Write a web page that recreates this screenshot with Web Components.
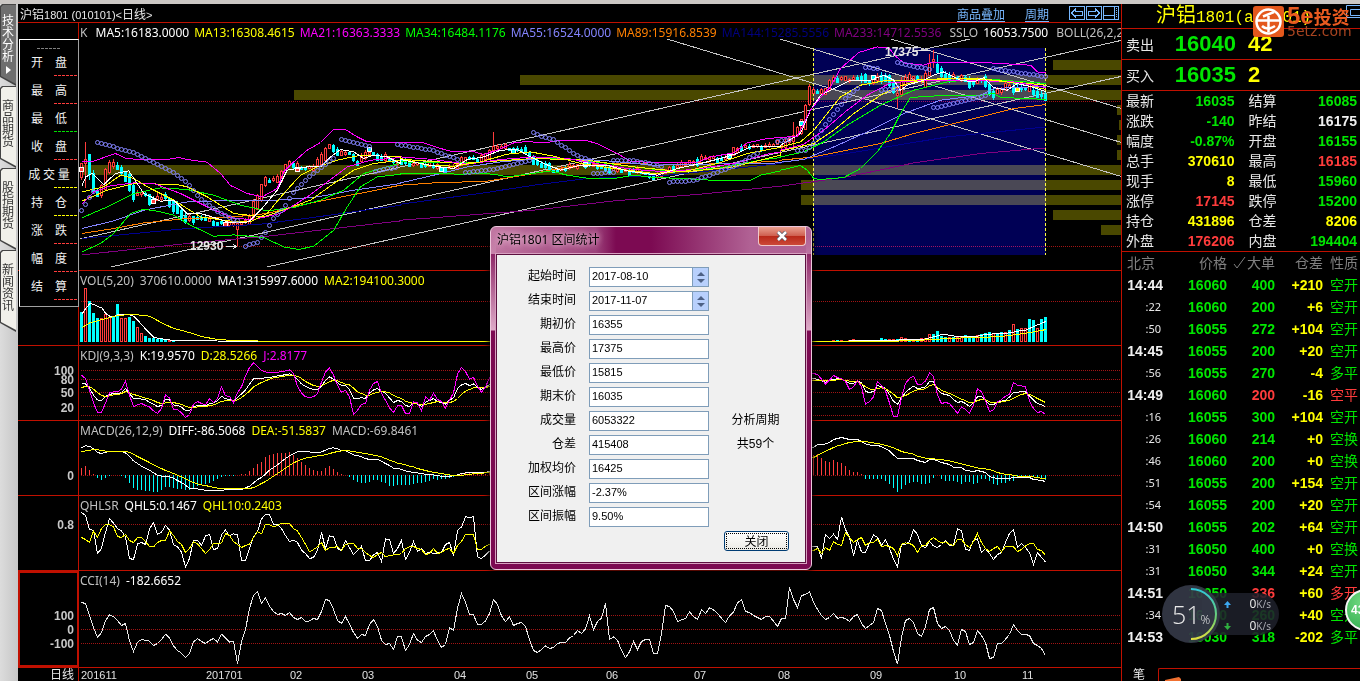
<!DOCTYPE html>
<html lang="zh-CN">
<head>
<meta charset="utf-8">
<title>沪铝1801 日线</title>
<style>
	html, body {
		margin: 0;
		background: #000;
		overflow: hidden;
	}

	body {
		font: 12px "Liberation Sans", "Noto Sans CJK SC", sans-serif;
		color: #e8e8e8;
	}
</style>
</head>
<body>
<trade-desk>
	<side-tabs slot="tabs"></side-tabs>
	<chart-header></chart-header>
	<k-panel top="23">
		<span style="color:#c0c0c0">K</span>
		<span style="color:#fff">&nbsp;MA5:16183.0000</span>
		<span style="color:#ff0">MA13:16308.4615</span>
		<span style="color:#f0f">MA21:16363.3333</span>
		<span style="color:#0f0">MA34:16484.1176</span>
		<span style="color:#8484ff">MA55:16524.0000</span>
		<span style="color:#ff8000">MA89:15916.8539</span>
		<span style="color:#000080">MA144:15285.5556</span>
		<span style="color:#800080">MA233:14712.5536</span>
		<span style="color:#c0c0c0">&nbsp;SSLO</span>
		<span style="color:#fff">16053.7500</span>
		<span style="color:#c0c0c0">&nbsp;BOLL(26,2,2)</span>
	</k-panel>
	<vol-panel top="271">
		<span style="color:#c0c0c0">VOL(5,20)</span>
		<span style="color:#c0c0c0">370610.0000</span>
		<span style="color:#fff">MA1:315997.6000</span>
		<span style="color:#ff0">MA2:194100.3000</span>
	</vol-panel>
	<kdj-panel top="346">
		<span style="color:#c0c0c0">KDJ(9,3,3)</span>
		<span style="color:#fff">K:19.9570</span>
		<span style="color:#ff0">D:28.5266</span>
		<span style="color:#f0f">J:2.8177</span>
	</kdj-panel>
	<macd-panel top="421">
		<span style="color:#c0c0c0">MACD(26,12,9)</span>
		<span style="color:#fff">DIFF:-86.5068</span>
		<span style="color:#ff0">DEA:-51.5837</span>
		<span style="color:#c0c0c0">MACD:-69.8461</span>
	</macd-panel>
	<qhl-panel top="496">
		<span style="color:#c0c0c0">QHLSR</span>
		<span style="color:#fff">QHL5:0.1467</span>
		<span style="color:#ff0">QHL10:0.2403</span>
	</qhl-panel>
	<cci-panel top="571">
		<span style="color:#c0c0c0">CCI(14)</span>
		<span style="color:#fff">-182.6652</span>
	</cci-panel>
	<time-axis></time-axis>
	<price-list slot="over"></price-list>
	<quote-board slot="quotes"></quote-board>
	<range-dialog slot="over"></range-dialog>
	<speed-meter slot="over"></speed-meter>
</trade-desk>

<script>
function shadow(el, html) {
	const template = document.createElement("template");
	template.innerHTML = html;
	el.attachShadow({ mode: "open" });
	el.shadowRoot.append(template.content.cloneNode(true));
}

class TradeDesk extends HTMLElement {
	constructor() {
		super();
		shadow(this, `
<style>
	:host {
		display: flex;
		position: relative;
		min-height: 100vh;
		box-sizing: border-box;
		border-top: 4px solid #cbc7c4;
		overflow: hidden;
	}

	main {
		flex: 1;
		min-width: 0;
		display: flex;
		flex-direction: column;
	}
</style>
<slot name="tabs"></slot>
<main><slot></slot></main>
<slot name="quotes"></slot>
<slot name="over"></slot>`);
	}
}
customElements.define("trade-desk", TradeDesk);

class SideTabs extends HTMLElement {
	constructor() {
		super();
		const tabs = ["技术分析", "商品期货", "股指期货", "新闻资讯"];
		shadow(this, `
<style>
	:host {
		display: flex;
		flex-direction: column;
		flex: none;
		width: 16px;
		padding-right: 2px;
		background: linear-gradient(90deg, #dcdcdc, #c6c6c6);
	}

	button {
		position: relative;
		width: 16px;
		height: 82px;
		margin: 0;
		padding: 0 2px 8px 2px;
		border: 0;
		background: #444;
		clip-path: polygon(0 2px, 2px 0, 100% 0, 100% 100%, 0 73px);
		font: 12px/12px "Noto Sans CJK SC", sans-serif;
		color: #333;
	}

	button::before {
		content: "";
		position: absolute;
		inset: 1px 0 0 1px;
		background: #f1f0ea;
		clip-path: polygon(0 2px, 2px 0, 100% 0, 100% 79px, 0 71px);
	}

	button:first-of-type {
		padding-bottom: 3px;
		color: #fff;
	}

	button:first-of-type::before {
		background: #6f6f6f;
	}

	span {
		position: relative;
		display: block;
	}

	svg {
		position: relative;
		display: block;
		margin: 4px auto 0;
	}
</style>
${tabs.map((t, i) => `<button type="button"><span>${[...t].join("<br>")}</span>${i ? "" : '<svg width="5" height="8"><path d="M0 0L5 4L0 8z" fill="#fff"/></svg>'}</button>`).join("")}`);
	}
}
customElements.define("side-tabs", SideTabs);

class ChartHeader extends HTMLElement {
	constructor() {
		super();
		shadow(this, `
<style>
	:host {
		display: flex;
		align-items: center;
		height: 18px;
		padding-left: 2px;
		border-bottom: 1px solid #c01000;
		border-right: 1px solid #c01000;
		font: 12px "Liberation Sans", "Noto Sans CJK SC", sans-serif;
		white-space: nowrap;
	}

	h1 {
		flex: 1;
		margin: 0;
		font: inherit;
	}

	small {
		font-size: 11px;
	}

	a {
		margin-right: 20px;
		color: #78b8ff;
		text-underline-offset: 2px;
	}

	svg {
		margin-right: 2px;
	}
</style>
<h1>沪铝<small>1801 (010101)&lt;</small>日线<small>&gt;</small></h1>
<a href="#">商品叠加</a>
<a href="#">周期</a>
<svg width="50" height="14" fill="none" stroke="#78b8ff" shape-rendering="crispEdges">
	<path d="M.5.5h15v13h-15zM17.5.5h15v13h-15zM34.5.5h15v13h-15zM45.5.5v13M34.5 9.5h11"/>
	<path d="M2.5 7l4-4v2h7v4h-7v2zM30.5 7l-4-4v2h-7v4h7v2z"/>
	<path d="M47.5 2v10" stroke-dasharray="1 1"/>
</svg>`);
	}
}
customElements.define("chart-header", ChartHeader);

/* One indicator strip: scale on the left, plot on the right, legend over the plot.
   Series are kept in thirds of a pixel, one bar is 4 pixels wide. */
class ChartPanel extends HTMLElement {
	connectedCallback() {
		this.top = Number(this.getAttribute("top"));
		shadow(this, `
<style>
	:host {
		display: grid;
		grid-template-columns: 61px minmax(0, 1fr);
		border-bottom: 1px solid #c01000;
		border-right: 1px solid #c01000;
	}

	.scale {
		width: 60px;
		border-right: 1px solid #c01000;
		font: bold 12px "Liberation Sans", sans-serif;
		fill: #c8c8c8;
	}

	.scale.active {
		outline: 2px solid #c01000;
		outline-offset: -2px;
	}

	.plot {
		grid-area: 1 / 2;
		width: 100%;
	}

	svg {
		display: block;
	}

	.legend {
		grid-area: 1 / 2;
		z-index: 1;
		height: 20px;
		padding-left: 1px;
		display: flex;
		gap: ${this.gap}px;
		overflow: hidden;
		font: 12px/20px "Noto Sans", sans-serif;
		white-space: nowrap;
	}
</style>
<svg class="scale ${this.active ? "active" : ""}" height="${this.size}">
	${this.scale.map(([v, y]) => `<text x="56" y="${y - this.top + 5}" text-anchor="end">${v}</text>`).join("")}
</svg>
<svg class="plot" height="${this.size}" fill="none" shape-rendering="crispEdges">
	${this.guides.map(y => `<path d="M2 ${y - this.top + .5}h3000" stroke="#a01414" stroke-dasharray="1 1"/>`).join("")}
	<g transform="translate(-79,${-this.top})">${this.draw()}</g>
</svg>
<div class="legend"><slot></slot></div>`);
	}

	get size() { return 74; }
	get gap() { return 6; }
	get scale() { return []; }
	get guides() { return []; }
}

// parts: [x offset, y offset, "x,y x,y ..."]
function points(parts) {
	return parts.flatMap(([dx, dy, s]) => s.split(" ").map(p => {
		const [x, y] = p.split(",");
		return [dx + x / 3, dy + y / 3];
	}));
}

// parts: [first x, y offset, "y y y ..."]
function steps([x, dy, s]) {
	return s.split(" ").map((y, i) => [x + i * 4, dy + y / 3]);
}

function line(pts, color) {
	return `<polyline points="${pts.map(([x, y]) => (x + .5).toFixed(1) + "," + (y + .2).toFixed(1)).join(" ")}" stroke="${color}"/>`;
}

function at(pts, x) {
	let i = 1;
	while (i < pts.length - 1 && pts[i][0] < x) i++;
	const [x0, y0] = pts[i - 1], [x1, y1] = pts[i];
	return x1 === x0 ? y1 : y0 + (y1 - y0) * (x - x0) / (x1 - x0);
}

const RED = "#ff3c3c", CYAN = "#00ffff";

class KPanel extends ChartPanel {
	get size() { return 247; }
	get gap() { return 5; }
	get guides() { return [101, 173, 246]; }

	bands() {
		return [[1053, 60], [520, 75], [294, 90], [1117, 105], [1119, 120], [1117, 135], [1117, 150],
			[80, 165], [801, 180], [801, 195], [1053, 210], [1101, 225]]
			.map(([x, y]) => `<rect x="${x}" y="${y}" width="2000" height="10" fill="#4a4800"/>`).join("");
	}

	averages() {
		const z = (a, b, c) => points([[0, 0, a], [400, 0, b], [780, 0, c]]);
		return [
			["#800080", z("244,764 560,730 800,708 1200,662", "0,660 400,630 640,602 900,582 1140,558", "0,558 200,530 400,488 600,460 797,443")],
			["#000090", z("244,715 560,685 780,672 950,650 1200,615", "0,612 250,578 400,555 560,535 800,525 1000,505 1140,490", "0,487 200,460 500,410 797,380")],
			["#ff8000", z("244,700 340,685 430,668 560,655 700,650 800,640 900,615 1000,595 1100,575 1200,555", "0,555 100,548 260,543 400,520 500,500 640,490 850,487 1000,490 1140,482", "0,480 100,470 300,430 400,400 600,350 700,325 797,313")],
			["#8484ff", z("244,685 340,662 430,630 560,605 700,600 830,600 950,590 1060,570 1200,550", "0,548 100,525 200,500 300,485 420,475 600,480 760,495 900,492 1050,490 1140,488", "0,486 70,478 160,440 260,395 370,340 480,300 600,285 640,265 797,258")],
			["#00ff00", z("244,653 320,620 400,580 480,563 560,568 640,585 720,615 800,632 880,622 960,600 1030,570 1090,520 1200,488", "0,485 200,488 400,475 500,475 640,492 800,512 950,505 1080,480 1140,472", "0,470 70,455 130,425 200,375 300,315 400,270 500,245 600,235 797,250")],
			["#ffff00", z("244,603 320,570 400,550 530,553 560,560 620,590 700,640 790,650 860,625 930,600 1000,550 1060,510 1120,490 1200,480", "0,477 180,490 400,475 560,480 700,500 850,515 1000,500 1140,465", "0,452 100,430 160,390 220,340 300,285 350,260 400,245 520,235 640,240 797,255")],
			["#ff00ff", z("244,613 280,575 330,557 400,548 460,550 540,580 620,620 700,655 760,658 840,640 920,590 980,545 1040,500 1110,480 1200,472", "0,470 100,478 200,492 300,478 400,470 500,475 600,492 700,508 800,515 900,505 1000,490 1100,462 1140,455", "0,450 70,432 130,390 200,330 260,285 330,248 430,240 560,240 700,245 797,262")],
			["#ffff00", z("244,575 310,560 360,525 400,535 450,565 520,600 600,650 680,662 750,665 800,640 850,580 900,525 950,500 1010,480 1080,465 1200,470", "0,475 80,495 160,498 240,485 320,462 390,455 460,468 540,490 640,505 760,520 860,512 950,490 1040,460 1120,445 1140,442", "0,440 60,425 100,390 140,340 180,290 240,255 320,240 400,240 500,235 600,235 700,248 797,268")],
			["#ffffff", z("244,558 256,530 275,520 310,553 345,520 385,512 410,550 430,580 480,603 520,600 560,640 600,640 650,655 690,668 745,665 780,630 830,570 860,510 920,500 960,500 990,470 1020,448 1060,455 1090,475 1120,465 1160,470 1200,490", "0,478 60,490 120,500 160,505 200,478 250,470 300,450 350,448 390,470 430,490 480,510 540,495 620,495 680,512 770,525 830,505 900,490 960,475 1010,460 1050,440 1140,440", "0,435 60,400 90,330 120,285 160,265 210,240 270,240 310,225 340,240 360,270 380,255 430,240 460,225 490,215 540,240 580,245 610,232 640,262 680,270 710,250 760,262 797,275")],
			["#ff00ff", z("244,485 280,483 310,472 345,460 375,474 410,478 500,478 535,472 560,478 620,486 660,520 690,556 740,580 785,590 830,565 850,515 880,485 920,450 960,427 1000,388 1035,388 1070,410 1100,425 1200,428", "0,428 70,428 120,445 160,455 210,452 250,463 290,450 340,428 380,424 430,428 470,422 560,422 590,430 650,460 690,483 750,487 890,487 930,470 1000,458 1040,428 1100,415 1140,412", "0,412 50,408 90,330 130,280 150,260 180,205 235,157 290,140 325,143 345,168 370,188 430,195 455,186 590,186 750,195 770,215 797,218")],
			["#00ff00", z("244,755 300,730 340,700 390,640 430,627 470,633 520,645 570,675 640,708 700,704 790,712 850,740 895,748 940,738 1000,690 1040,620 1080,560 1130,530 1200,522", "0,520 150,520 180,524 210,518 280,522 320,530 380,522 450,512 500,525 560,534 640,535 700,525 760,532 850,535 930,540 1050,540 1080,525 1140,512", "0,510 60,496 80,510 100,535 120,538 190,532 240,505 290,455 330,400 360,340 390,292 500,285 600,285 640,280 660,292 740,295 797,298")]
		].map(([c, p]) => line(p, c)).join("");
	}

	candles() {
		const path = points([
			[0, 0, "244,505 256,480 268,500 280,550 292,580 304,570 316,530 328,500 345,495 376,525 388,545 400,585 430,580 460,600 496,590 520,615 556,660 580,650 640,665 700,675 748,660 772,600 796,540 830,542 868,485 892,505 940,500 965,480 990,432 1020,465 1045,455 1072,485 1110,455 1150,475 1200,490"],
			[400, 0, "3,480 30,495 70,490 130,505 170,500 200,470 240,482 285,440 330,445 370,450 410,485 460,510 500,505 550,490 640,510 720,515 770,530 820,500 870,490 910,475 980,475 1020,440 1080,440 1130,432"],
			[780, 0, "0,440 40,410 70,375 90,270 130,280 160,235 200,240 240,230 270,250 300,225 330,245 352,285 370,240 400,230 430,245 448,205 460,180 475,215 500,230 550,235 580,250 605,235 640,280 680,260 740,265 797,290"]
		]);
		// bars whose range stands out: x -> [high, low]
		const spikes = { 85: [142, 188], 89: [155, 180], 237: [226, 246], 493: [132, 152], 929: [54, 72], 933: [50, 68], 937: [55, 74], 897: [86, 108], 793: [122, 148], 1045: [92, 99] };
		const reds = [85, 237, 493, 809, 929];
		let out = "";
		for (let i = 0; i < 242; i++) {
			const x = 81 + i * 4;
			const wide = x > 860 || x < 200 ? 3 : 2;
			const mid = at(path, x);
			const slope = at(path, x + 4) - at(path, x - 4);
			const wobble = Math.sin(i * 2.3) + Math.sin(i * 1.1 + 2);
			const up = reds.includes(x) || slope + wobble * 2 < 0;
			const half = Math.max(1, Math.round(Math.abs(slope) / 3 + Math.abs(wobble) * wide / 2));
			const y = Math.round(mid + wobble);
			let high = y - half - Math.round(Math.abs(Math.sin(i * 3.7)) * wide);
			let low = y + half + Math.round(Math.abs(Math.cos(i * 1.9)) * wide);
			if (spikes[x]) [high, low] = spikes[x];
			const c = up ? RED : CYAN;
			out += `<path d="M${x + .5} ${high}V${low}" stroke="${c}"/>`;
			out += up
				? `<rect x="${x - .5}" y="${y - half + .5}" width="2" height="${half * 2}" fill="#000" stroke="${c}"/>`
				: `<rect x="${x - 1}" y="${y - half}" width="3" height="${half * 2 + 1}" fill="${c}"/>`;
		}
		for (const [x, y, c] of [[81, 169, RED], [153, 201, RED], [225, 224, RED], [297, 169, RED], [369, 149, CYAN], [441, 169, CYAN], [513, 151, CYAN], [585, 164, CYAN], [729, 156, CYAN], [801, 123, CYAN], [873, 77, CYAN], [1017, 89, "#ff0"]])
			out += `<rect x="${x - 1.5}" y="${y - 1.5}" width="4" height="4" fill="${c}" stroke="#fff"/>`;
		return out;
	}

	stops() {
		const runs = [
			[0, "244,630 256,613 268,592 280,572"],
			[0, "292,427 400,455 450,482 520,515 560,545 600,595 650,632 720,665"],
			[0, "736,737 772,725 800,690 820,655 850,625 880,575 930,525 1006,470"],
			[0, "1024,418 1110,440"],
			[0, "1124,512 1190,500"],
			[0, "1192,432 1290,448 1370,475"],
			[400, "195,517 290,505 390,480"],
			[400, "400,397 430,410 460,418 500,445 540,470 575,482"],
			[400, "580,520 640,515"],
			[400, "640,480 700,480 790,498"],
			[400, "808,545 880,540 940,520 1000,498 1080,455"],
			[400, "1130,422 1170,418"],
			[780, "52,450 75,450 100,430 130,380 170,330 200,290 240,258"],
			[780, "255,200 290,205"],
			[780, "304,270 350,262"],
			[780, "352,187 450,208"],
			[780, "460,322 520,310 620,285"],
			[780, "640,205 797,229"]
		];
		let out = "";
		for (const [dx, s] of runs) {
			const run = points([[dx, 0, s]]);
			for (let x = run[0][0]; x <= run[run.length - 1][0] + 1; x += 4)
				out += `<circle cx="${Math.round(x) + .5}" cy="${Math.round(at(run, x)) + .5}" r="2"/>`;
		}
		return `<g stroke="#8484ff" shape-rendering="auto">${out}</g>`;
	}

	draw() {
		const trends = [[80, 239, 970, 39], [111, 267, 1123, 40], [267, 267, 1123, 76],
			[667, 39, 1123, 177], [780, 39, 1123, 143], [891, 39, 1123, 109]];
		return this.bands()
			+ `<rect x="813" y="48" width="233" height="207" fill="#000055" style="mix-blend-mode:screen"/>`
			+ `<path d="M813.5 48v207M1045.5 48v207" stroke="#ffff40" stroke-dasharray="3 2"/>`
			+ trends.map(([a, b, c, d]) => `<path d="M${a} ${b}L${c} ${d}" stroke="#c4c4c4"/>`).join("")
			+ this.candles() + this.averages() + this.stops()
			+ `<g font-family="Liberation Sans" font-size="12" font-weight="bold" fill="#e8e8e8">
				<text x="190" y="250">12930</text><text x="885" y="56">17375</text></g>
			<path d="M226 246.5h10M233 244l3 2.5l-3 2.5M919 50.5h11" stroke="#e8e8e8"/>`;
	}
}
customElements.define("k-panel", KPanel);

class VolPanel extends ChartPanel {
	get guides() { return [301]; }

	bars(x, tops, colors) {
		return tops.split(" ").map((t, i) => {
			const y = Math.round(t / 3), px = x + i * 4;
			return colors[i] === "r"
				? `<rect x="${px - .5}" y="${y + .5}" width="2" height="${Math.max(0, 341 - y)}" stroke="${RED}"/>`
				: `<rect x="${px - 1}" y="${y}" width="3" height="${342 - y}" fill="${CYAN}"/>`;
		}).join("");
	}

	draw() {
		return this.bars(81, "936 865 903 939 953 953 942 950 948 912 953 953 950 963 980 1000 1008 1013 1014 1017 1018 1019 1020 1020", "crcccrrrccrrccrrccccccrc")
			+ this.bars(829, "1022 1021 1020 1021 1022 1021 1018 1020 1020 1020 1020 1020 1019 1015 1018 1018 1016 1017 1012 1013 1017 1016 1017 1014 1014 1003 1002 993 1008 1012 1010 1010 1012 1012 1006 1009 1010 1006 1003 1000 997 998 1000 995 996 991 972 988 983 984 957 959 985 957 951", "crcrcrrccrcrcccrrcrrcrcrrrccccrcrrcccrcccrccrcrcrrccrcc")
			+ line(points([[0, 0, "244,942 256,925 268,910 280,913 292,919 304,923 316,940 328,948 340,950 352,944 388,944 400,948 412,960 424,974 436,987 448,1000 460,1011 472,1014 484,1016 520,1021 700,1023 2440,1023"], [780, 0, "100,1024 230,1022 340,1020 430,1017 460,1010 484,1003 508,1005 532,1010 580,1010 616,1003 652,1000 688,998 712,993 736,990 760,979 796,964"]]), "#fff")
			+ line(points([[0, 0, "244,982 268,968 316,955 352,946 388,943 424,945 448,948 484,968 520,985 556,994 604,1009 650,1018 700,1021 800,1023 2440,1024"], [780, 0, "100,1025 220,1024 340,1023 420,1020 520,1014 600,1012 660,1009 700,1004 750,997 797,988"]]), "#ff0");
	}
}
customElements.define("vol-panel", VolPanel);

class KdjPanel extends ChartPanel {
	get scale() { return [[100, 370], [80, 379], [50, 392], [20, 407]]; }
	get guides() { return [370, 379, 392, 406, 415]; }

	draw() {
		const k = [
			[81, 340, "131 131 143 165 179 181 168 163 160 161 157 145 160 175 174 177 179 186 192 199 196 178 179 194 196 201 211 211 200 196 196 197 190 188 181 168 176 177 183 172 161 149 132 116 114 114 113 111 110 107 106 103 101 106 118 131 139 144 148 147 138 121 110 117 128 136 136 148 174 174 173 174 158 149 145 154 159 173 187 181 184 196 199 189 192 199 186 181 175 184 188 192 180 173 145 134 130 136 131 142 148 140 133"],
			[813, 340, "115 117 122 126 121 117 116 117 122 130 129 122 127 154 157 154 135 140 144 163 183 193 172 157 146 138 145 143 140 124 125 147 160 163 166 178 187 184 190 199 187 170 169 180 193 193 187 183 180 170 157 156 154 155 168 180 190 194 199"]];
		const d = [
			[81, 340, "142 139 139 147 157 166 169 167 164 164 160 154 158 163 166 170 174 177 181 187 190 188 186 187 190 192 198 202 202 200 199 199 196 194 190 183 182 181 181 179 172 163 153 140 133 127 122 117 113 111 109 107 106 106 108 115 124 130 136 138 137 131 124 121 122 127 132 134 143 155 160 165 165 160 156 154 155 158 166 171 175 183 187 190 191 193 192 190 187 184 185 187 187 184 175 163 153 148 143 140 142 142 139"],
			[813, 340, "121 120 120 122 121 120 119 119 120 123 125 125 130 140 146 148 144 143 146 153 162 173 171 166 160 153 149 149 145 137 133 142 150 155 160 165 172 177 181 188 187 181 178 179 185 187 187 185 183 180 174 168 163 160 162 168 175 181 187"]];
		const j = [
			[81, 340, "105 115 150 188 216 217 188 158 155 155 146 124 165 199 194 190 196 200 212 220 205 164 173 208 208 218 232 223 192 184 190 194 176 186 175 140 167 168 188 157 140 107 82 68 78 91 95 97 97 96 94 92 89 100 138 158 170 171 170 160 126 96 83 105 136 156 150 170 223 210 192 190 150 130 124 160 180 203 217 197 196 220 220 185 188 212 170 181 158 178 184 204 180 158 102 82 94 117 112 138 156 140 113"],
			[813, 340, "100 103 117 132 120 106 112 116 124 148 140 121 140 192 184 170 124 135 152 188 229 229 172 130 115 108 133 133 122 98 109 165 190 187 190 205 219 200 208 219 195 145 155 182 214 209 185 178 168 163 127 135 137 140 183 205 217 214 223"]];
		return line(k.flatMap(steps), "#fff") + line(d.flatMap(steps), "#ff0") + line(j.flatMap(steps), "#f0f");
	}
}
customElements.define("kdj-panel", KdjPanel);

class MacdPanel extends ChartPanel {
	get scale() { return [[0, 475]]; }
	get guides() { return [475]; }

	draw() {
		const diff = [
			[81, 340, "323 317 318 326 337 340 336 334 334 334 334 338 348 362 370 378 384 390 398 405 408 408 410 414 421 427 435 444 446 446 448 450 452 452 452 450 449 448 448 448 448 443 438 428 418 412 402 390 382 374 364 355 347 340 335 335 335 335 337 337 335 330 324 323 326 331 332 337 344 346 350 355 358 358 358 363 370 376 384 384 388 392 395 396 398 400 402 402 404 406 408 410 408 407 404 400 398 397 397 398 398 397 394"],
			[813, 340, "322 313 313 311 307 298 295 292 295 298 298 298 304 311 314 316 316 319 326 332 344 355 355 355 355 355 361 364 367 358 358 362 367 370 373 381 382 383 390 392 394 391 394 397 408 413 414 415 415 414 412 412 412 412 412 418 419 421 424"]];
		const dea = [
			[81, 340, "335 332 330 328 329 330 333 334 334 334 334 334 336 342 349 355 361 367 374 380 385 391 395 400 405 410 416 422 427 431 434 436 439 441 444 446 446 446 446 446 446 446 445 442 437 430 424 416 408 400 392 384 376 368 363 358 354 351 350 347 345 344 340 337 334 332 331 332 334 336 338 340 342 345 347 350 355 360 364 369 371 374 378 380 385 388 391 394 396 398 400 402 404 406 406 405 404 402 401 400 399 398 397"],
			[813, 340, "352 346 339 333 328 322 317 314 310 307 305 304 304 304 306 308 310 312 316 318 323 328 334 337 339 342 348 351 354 356 356 357 358 360 362 365 368 371 374 377 380 383 385 386 388 392 397 400 402 403 405 408 409 409 410 410 412 414 416"]];
		const bars = [
			[81, 0, "-20 -28 -16 -2 10 16 8 2 0 0 4 8 24 40 44 46 47 48 50 50 44 36 36 40 42 42 46 46 38 32 30 28 24 18 12 6 4 2 2 1 -2 -4 -12 -22 -34 -38 -55 -61 -64 -65 -67 -67 -70 -61 -52 -40 -29 -22 -16 -13 -13 -20 -26 -18 -9 -2 1 5 16 22 25 25 20 14 16 22 24 32 34 30 30 31 30 26 25 25 20 17 13 14 12 13 10 5 1 -4 -7 -10 -9 -7 -2 -4 -8"],
			[813, 0, "-60 -62 -52 -43 -40 -46 -40 -36 -28 -16 -10 -9 -2 11 13 13 11 13 17 26 38 50 41 29 25 20 20 26 26 23 8 0 11 17 17 17 22 26 20 20 26 23 13 13 18 26 29 23 23 18 17 8 8 8 5 5 8 11 14"]];
		return bars.flatMap(steps).map(([x, h]) =>
			`<path d="M${x + .5} 475v${Math.round(h)}" stroke="${h < 0 ? RED : CYAN}"/>`).join("")
			+ line(diff.flatMap(steps), "#fff") + line(dea.flatMap(steps), "#ff0");
	}
}
customElements.define("macd-panel", MacdPanel);

class QhlPanel extends ChartPanel {
	get scale() { return [["0.8", 524]]; }
	get guides() { return [524]; }

	draw() {
		const fast = [
			[81, 340, "517 526 568 570 640 625 577 535 549 565 572 590 655 658 611 607 613 566 547 583 576 556 570 613 620 636 680 655 600 600 616 587 583 628 625 584 569 587 581 583 660 661 625 590 574 536 523 523 553 553 565 586 604 600 607 630 640 655 652 631 577 625 587 589 625 631 601 622 643 631 618 662 661 644 637 664 596 598 640 625 601 658 637 604 634 625 640 636 640 638 637 613 607 646 571 560 530 531 530 650 655 645 633"],
			[813, 340, "618 620 655 583 595 582 598 530 568 592 646 600 635 637 608 584 592 616 598 625 657 680 613 613 604 568 583 616 623 604 617 622 613 601 616 616 566 571 628 630 600 596 637 625 640 658 643 637 607 580 568 622 610 622 638 673 637 652 665"]];
		const slow = [
			[81, 340, "592 598 607 573 592 565 553 553 560 589 592 583 601 607 592 592 604 619 620 607 601 601 572 586 604 613 637 625 605 611 625 640 628 610 610 608 580 586 604 613 622 616 612 592 574 581 552 553 560 556 549 550 550 565 572 592 612 635 628 620 607 631 622 622 619 631 612 611 610 625 625 637 646 652 643 637 650 646 644 644 640 625 620 619 625 628 643 640 625 640 637 628 625 640 616 604 583 583 584 628 628 618 612"],
			[813, 340, "631 625 640 622 631 605 612 616 577 592 607 598 592 616 607 607 597 620 616 619 625 646 612 608 610 616 637 617 616 601 592 601 608 605 612 616 598 598 613 622 604 580 607 625 634 625 619 635 619 620 620 634 628 617 610 610 628 631 646"]];
		return line(fast.flatMap(steps), "#fff") + line(slow.flatMap(steps), "#ff0");
	}
}
customElements.define("qhl-panel", QhlPanel);

class CciPanel extends ChartPanel {
	get size() { return 96; }
	get active() { return true; }
	get scale() { return [[100, 615], [0, 629], [-100, 643]]; }
	get guides() { return [615, 629, 643]; }

	draw() {
		return line([
			[81, 340, "787 790 825 862 892 877 842 824 829 841 856 850 902 934 906 898 900 903 916 910 898 882 893 917 931 939 952 940 905 895 904 910 901 895 905 882 893 906 903 970 905 868 805 766 755 790 772 798 814 823 820 826 817 832 838 832 844 842 835 838 814 778 781 808 841 850 829 852 877 894 883 886 853 838 859 900 913 910 928 889 890 931 913 880 900 907 889 883 872 900 922 913 862 871 804 760 787 823 824 853 853 842"],
			[489, 560, "160 118 133 167 184 170 196 190 187 199 238 271 277 268 257 265 262 250 247 247 233 226 211 220 206 167 208 184 174 130 238 230 240 271 292 275 244 268 244 238 238 280 280 220 136 139 154 184 179 175 155 169 178 149 160 143 149 160 174 187 167 155 128 118 154 157 166 172 178 169 169 183 199 175 175 82 118 142 106 103 95"],
			[813, 340, "785 808 826 838 832 820 834 832 835 844 829 823 850 865 856 847 805 811 850 886 934 972 892 841 835 847 880 889 859 808 802 850 865 859 871 901 915 868 874 913 907 871 886 907 955 952 910 910 897 883 853 871 883 883 886 910 916 925 946"]
		].flatMap(steps), "#e8e8e8");
	}
}
customElements.define("cci-panel", CciPanel);

class TimeAxis extends HTMLElement {
	constructor() {
		super();
		const months = [[81, "201611"], [206, "201701"], [290, "02"], [362, "03"], [454, "04"], [526, "05"],
			[606, "06"], [694, "07"], [778, "08"], [870, "09"], [954, "10"], [1022, "11"]];
		shadow(this, `
<style>
	:host {
		display: flex;
		height: 14px;
		border-right: 1px solid #c01000;
		line-height: 14px;
		overflow: hidden;
	}

	span {
		width: 56px;
		padding-right: 4px;
		border-right: 1px solid #c01000;
		text-align: right;
	}

	svg {
		flex: 1;
		font: 11px "Liberation Sans", sans-serif;
		fill: #e0e0e0;
	}
</style>
<span>日线</span>
<svg height="14">${months.map(([x, t]) => `<text x="${x - 79}" y="11">${t}</text>`).join("")}</svg>`);
	}
}
customElements.define("time-axis", TimeAxis);

class PriceList extends HTMLElement {
	constructor() {
		super();
		const rows = [["开　盘", "#ff3c3c"], ["最　高", "#ff3c3c"], ["最　低", "#00e000"], ["收　盘", "#ff3c3c"],
			["成 交 量", "#ff0"], ["持　仓", "#ff0"], ["涨　跌", "#ff3c3c"], ["幅　度", "#ff3c3c"], ["结　算", "#ff3c3c"]];
		shadow(this, `
<style>
	:host {
		position: absolute;
		left: 19px;
		top: 35px;
		width: 58px;
		height: 266px;
		background: #000;
		border: 1px solid #fff;
		border-right-color: #a0a0a0;
		border-bottom-color: #a0a0a0;
		color: #f0f0f0;
	}

	hr {
		width: 24px;
		height: 1px;
		margin: 0 0 5px auto;
		border: 0;
		background: repeating-linear-gradient(90deg, currentColor 0 3px, transparent 3px 4px);
	}

	hr.date {
		margin: 8px auto 4px;
	}

	p {
		margin: 0;
		height: 22px;
		line-height: 18px;
		text-align: center;
		font-family: "Noto Sans CJK SC", sans-serif;
	}
</style>
<hr class="date">
${rows.map(([t, c]) => `<p>${t}</p><hr style="color:${c}">`).join("")}`);
	}
}
customElements.define("price-list", PriceList);

class QuoteBoard extends HTMLElement {
	constructor() {
		super();
		const g = "green", r = "red", y = "yellow", w = "white";
		const quotes = [
			["最新", "16035", g, "结算", "16085", g],
			["涨跌", "-140", g, "昨结", "16175", w],
			["幅度", "-0.87%", g, "开盘", "16155", g],
			["总手", "370610", y, "最高", "16185", r],
			["现手", "8", y, "最低", "15960", g],
			["涨停", "17145", r, "跌停", "15200", g],
			["持仓", "431896", y, "仓差", "8206", y],
			["外盘", "176206", r, "内盘", "194404", g]
		];
		const ticks = [
			["14:44", 16060, 400, "+210", "空开"], [":22", 16060, 200, "+6", "空开"], [":50", 16055, 272, "+104", "空开"],
			["14:45", 16055, 200, "+20", "空开"], [":56", 16055, 270, "-4", "多平"], ["14:49", 16060, 200, "-16", "空平", r],
			[":16", 16055, 300, "+104", "空开"], [":26", 16060, 214, "+0", "空换"], [":46", 16060, 200, "+0", "空换"],
			[":51", 16055, 200, "+154", "空开"], [":54", 16055, 200, "+20", "空开"], ["14:50", 16055, 202, "+64", "空开"],
			[":31", 16050, 400, "+0", "空换"], [":31", 16050, 344, "+24", "空开"], ["14:51", 16050, 336, "+60", "多开", r],
			[":34", 16040, 260, "+40", "空开"], ["14:53", 16030, 318, "-202", "多平"]
		];
		shadow(this, `
<style>
	:host {
		display: flex;
		flex-direction: column;
		flex: none;
		width: 238px;
		position: relative;
		font: 14px "Liberation Sans", "Noto Sans CJK SC", sans-serif;
		white-space: nowrap;
	}

	h2 {
		margin: 0;
		height: 24px;
		padding-left: 34px;
		font: 16px/26px "Liberation Mono", "Noto Sans CJK SC", monospace;
		color: #ff0;
	}

	h2 span {
		font-size: 20px;
	}

	.order {
		display: flex;
		align-items: center;
		height: 30px;
		padding-left: 4px;
		border-top: 1px solid #c01000;
	}

	.order b {
		width: 82px;
		text-align: right;
		font-size: 22px;
	}

	.order b + b {
		padding-left: 12px;
		text-align: left;
	}

	.green { color: #00e600; }
	.red { color: #ff3c3c; }
	.yellow { color: #ff0; }
	.white { color: #f0f0f0; }

	dl {
		display: grid;
		grid-template-columns: 28px 1fr 42px 1fr;
		grid-auto-rows: 20px;
		margin: 0;
		padding: 0 3px 0 4px;
		border: solid #c01000;
		border-width: 1px 0;
		line-height: 20px;
	}

	dt:nth-of-type(even) {
		padding-left: 14px;
	}

	dd {
		margin: 0;
		text-align: right;
		font-weight: bold;
	}

	table {
		width: 100%;
		padding: 0 2px 0 5px;
		table-layout: fixed;
		border-spacing: 0;
	}

	tr {
		height: 22px;
	}

	th, td {
		padding: 0;
		text-align: right;
		line-height: 22px;
	}

	th {
		font-weight: normal;
		color: #808080;
	}

	th:first-child {
		text-align: left;
	}

	td {
		font-weight: bold;
	}

	td:last-child {
		font-weight: normal;
	}

	.sec {
		padding-right: 2px;
		font: 11px/22px "Noto Sans", sans-serif;
	}

	th svg {
		margin-right: 1px;
		vertical-align: -2px;
	}

	footer {
		display: flex;
		align-items: flex-end;
		gap: 13px;
		margin-top: auto;
		padding-left: 11px;
		height: 14px;
		font-size: 12px;
		line-height: 13px;
	}

	footer div {
		flex: 1;
		height: 13px;
		border: solid #c01000;
		border-width: 1px 0 0 1px;
		border-radius: 2px 0 0 0;
	}

	footer svg {
		display: block;
		margin: 8px 0 0 6px;
	}

	.mark {
		position: absolute;
		right: 0;
		top: 0;
		width: 107px;
		height: 36px;
		display: grid;
		grid-template-columns: 34px 1fr;
		grid-template-rows: 20px 14px;
		color: #e85a20;
	}

	.mark svg {
		grid-row: 1 / 3;
		margin-top: 2px;
	}

	.mark b {
		font: bold 18px/23px "Liberation Sans", "Noto Sans CJK SC", sans-serif;
	}

	.mark b span {
		font-size: 24px;
	}

	.mark small {
		font: 14px/15px "DejaVu Sans", sans-serif;
		color: #a84420;
	}

	.win {
		position: absolute;
		right: 0;
		top: 1px;
	}
</style>
<h2><span>沪铝</span>1801(al1801)</h2>
<div class="order">卖出<b class="green">16040</b><b class="yellow">42</b></div>
<div class="order">买入<b class="green">16035</b><b class="yellow">2</b></div>
<dl>${quotes.map(q => `<dt>${q[0]}</dt><dd class="${q[2]}">${q[1]}</dd><dt>${q[3]}</dt><dd class="${q[5]}">${q[4]}</dd>`).join("")}</dl>
<table>
	<colgroup><col style="width:36px"><col style="width:64px"><col style="width:48px"><col style="width:48px"><col></colgroup>
	<thead><tr><th>北京</th><th>价格</th><th><svg width="13" height="14" fill="none" stroke="#808080"><path d="M1 8l3 4L12 1"/></svg>大单</th><th>仓差</th><th>性质</th></tr></thead>
	<tbody>${ticks.map(([t, p, v, d, n, c]) => `<tr><td class="${t[0] === ":" ? "sec" : "white"}">${t}</td><td class="green">${p}</td><td class="${c || g}">${v}</td><td class="yellow">${d}</td><td class="${c || g}">${n}</td></tr>`).join("")}</tbody>
</table>
<footer>笔<div><svg width="20" height="5"><path d="M0 3l14-3l2 2v3H0z" fill="#f07030"/></svg></div></footer>
<svg class="win" width="14" height="14" fill="none" stroke="#78b8ff"><path d="M.5.5h15v12h-15zM4.5 4.5h10v6h-10z"/></svg>
<div class="mark">
	<svg width="31" height="31"><rect width="31" height="31" rx="3" fill="#e4581c"/><g fill="none" stroke="#fff" stroke-width="2.5"><circle cx="15.500" cy="15.500" r="12"/><path d="M21 6L10 10.500M4 14.500h23M15.500 10v16M9 20q5 5 13 0"/></g></svg>
	<b><span>5e</span>投资</b>
	<small>5etz.com</small>
</div>`);
	}
}
customElements.define("quote-board", QuoteBoard);

class RangeDialog extends HTMLElement {
	constructor() {
		super();
		const rows = [["起始时间", "2017-08-10"], ["结束时间", "2017-11-07"], ["期初价", "16355"], ["最高价", "17375"],
			["最低价", "15815"], ["期末价", "16035"], ["成交量", "6053322"], ["仓差", "415408"], ["加权均价", "16425"],
			["区间涨幅", "-2.37%"], ["区间振幅", "9.50%"]];
		const spin = `<div class="spin"><button type="button" aria-label="+"><svg width="8" height="4"><path d="M0 4L4 0L8 4z" fill="#4d6185"/></svg></button><button type="button" aria-label="-"><svg width="8" height="4"><path d="M0 0L4 4L8 0z" fill="#4d6185"/></svg></button></div>`;
		const notes = { 6: "分析周期", 7: "共59个" };
		shadow(this, `
<style>
	:host {
		position: absolute;
		left: 490px;
		top: 222px;
		width: 322px;
		box-sizing: border-box;
		padding: 0 5px 6px;
		border: 1px solid #ecc8dc;
		border-radius: 6px;
		background:
			linear-gradient(180deg, rgba(255, 225, 240, 0) 10px, rgba(255, 225, 240, .75) 103px, rgba(255, 225, 240, 0) 104px) no-repeat 0 0 / 5px 100%,
			linear-gradient(180deg, rgba(255, 225, 240, 0) 10px, rgba(255, 225, 240, .75) 103px, rgba(255, 225, 240, 0) 104px) no-repeat 100% 0 / 5px 100%,
			linear-gradient(90deg, rgba(200, 130, 170, .9), rgba(170, 90, 140, .7) 105px, rgba(122, 0, 75, 0) 125px, rgba(122, 0, 75, 0) 160px, rgba(190, 120, 165, .8) 260px) no-repeat 0 0 / 100% 27px,
			#7c0a52;
		box-shadow: 0 0 6px 1px #000;
		color: #000;
		font: 12px "Liberation Sans", "Noto Sans CJK SC", sans-serif;
	}

	header {
		display: flex;
		height: 27px;
		align-items: flex-start;
	}

	h2 {
		flex: 1;
		margin: 0;
		padding-left: 1px;
		font: 12px/26px "Noto Sans", "Noto Sans CJK SC", sans-serif;
		text-shadow: 0 0 6px #f0c8dc, 0 0 6px #f0c8dc;
	}

	.close {
		width: 48px;
		height: 19px;
		padding: 0;
		border: 1px solid #f0c8c8;
		border-top: 0;
		border-radius: 0 0 4px 4px;
		background: linear-gradient(#eaa090, #cf6050 48%, #b82818 50%, #cc4838);
	}

	form {
		display: grid;
		grid-template-columns: 79px 120px 1fr;
		grid-template-rows: repeat(11, 24px);
		column-gap: 13px;
		align-items: center;
		padding: 10px 16px 11px 0;
		border: 1px solid #5c1040;
		outline: 1px solid #d8a0c0;
		background: #f0f0f0;
	}

	label, output {
		height: 20px;
		line-height: 18px;
	}

	label {
		text-align: right;
	}

	.field {
		display: flex;
		height: 18px;
		border: 1px solid #7f9db9;
		background: #fff;
	}

	input {
		flex: 1;
		min-width: 0;
		padding: 0 0 2px 2px;
		border: 0;
		outline: 0;
		background: none;
		font: 11px "Liberation Sans", sans-serif;
		color: #000;
	}

	.spin {
		display: flex;
		flex-direction: column;
		justify-content: center;
		gap: 3px;
		width: 15px;
		border-left: 1px solid #7f9db9;
		background: #b8d0fc;
	}

	.spin button {
		display: flex;
		justify-content: center;
		padding: 0;
		border: 0;
		background: none;
	}

	output {
		text-align: center;
	}

	.ok {
		grid-column: 1 / 4;
		justify-self: end;
		width: 65px;
		height: 20px;
		margin-top: 2px;
		padding: 0;
		border: 1px solid #003c74;
		border-radius: 3px;
		outline: 1px dotted #000;
		outline-offset: -3px;
		background: linear-gradient(#fff, #ecebe5);
		font: 12px/16px "Noto Sans CJK SC", sans-serif;
		color: #000;
	}
</style>
<header>
	<h2>沪铝1801 区间统计</h2>
	<button class="close" type="button" aria-label="关闭窗口"><svg width="12" height="10"><path d="M2 1l8 8M10 1l-8 8" stroke="#505060" stroke-width="4"/><path d="M2 1l8 8M10 1l-8 8" stroke="#fff" stroke-width="2.5"/></svg></button>
</header>
<form>
	${rows.map(([t, v], i) => `<label for="f${i}">${t}</label><div class="field"><input id="f${i}" value="${v}">${i < 2 ? spin : ""}</div><output>${notes[i] || ""}</output>`).join("")}
	<button class="ok" type="button">关闭</button>
</form>`);
	}
}
customElements.define("range-dialog", RangeDialog);

class SpeedMeter extends HTMLElement {
	constructor() {
		super();
		shadow(this, `
<style>
	:host {
		position: absolute;
		right: 0;
		top: 581px;
		width: 198px;
		height: 58px;
		display: flex;
		align-items: center;
		color: #e8e8e8;
	}

	.dial {
		position: relative;
		z-index: 1;
		flex: none;
		width: 58px;
		height: 58px;
		border-radius: 50%;
		background: rgba(52, 56, 70, .93);
	}

	.dial svg {
		position: absolute;
		inset: 0;
	}

	.dial p {
		margin: 0;
		text-align: center;
		font: 25px/58px "Open Sans", sans-serif;
		font-weight: 300;
	}

	.dial small {
		font-size: 12px;
	}

	.rates {
		box-sizing: border-box;
		width: 77px;
		height: 42px;
		margin-left: -18px;
		padding: 0 8px 0 22px;
		border-radius: 0 21px 21px 0;
		background: rgba(30, 32, 42, .88);
		font: 12px/21px "Noto Sans", sans-serif;
	}

	.rates div {
		display: flex;
		align-items: center;
		justify-content: space-between;
	}

	.rates small {
		font-size: 10px;
		color: #a8a8b0;
	}

	.ball {
		position: absolute;
		left: 183px;
		top: 4px;
		width: 42px;
		height: 42px;
		box-sizing: border-box;
		border: 2px solid #f4f4f4;
		border-radius: 50%;
		background: radial-gradient(circle at 40% 30%, #70d880, #28a848);
		padding-left: 4px;
		font: bold 12px/38px "Liberation Sans", sans-serif;
		color: #fff;
	}
</style>
<div class="dial">
	<svg width="58" height="58" fill="none" stroke-width="2"><defs><linearGradient id="g" x2="0" y2="1"><stop stop-color="#30c8d8"/><stop offset=".6" stop-color="#70d070"/><stop offset="1" stop-color="#e0e040"/></linearGradient></defs><path d="M29 4A25 25 0 0 1 29 54" stroke="url(#g)"/></svg>
	<p>51<small>%</small></p>
</div>
<div class="rates">
	<div><svg width="7" height="7"><path d="M3.5 0L7 4H4.5v3h-2V4H0z" fill="#3ca8f0"/></svg><span>0<small>K/s</small></span></div>
	<div><svg width="7" height="7"><path d="M3.5 7L7 3H4.5V0h-2v3H0z" fill="#30b040"/></svg><span>0<small>K/s</small></span></div>
</div>
<div class="ball">43</div>`);
	}
}
customElements.define("speed-meter", SpeedMeter);
</script>
</body>
</html>
